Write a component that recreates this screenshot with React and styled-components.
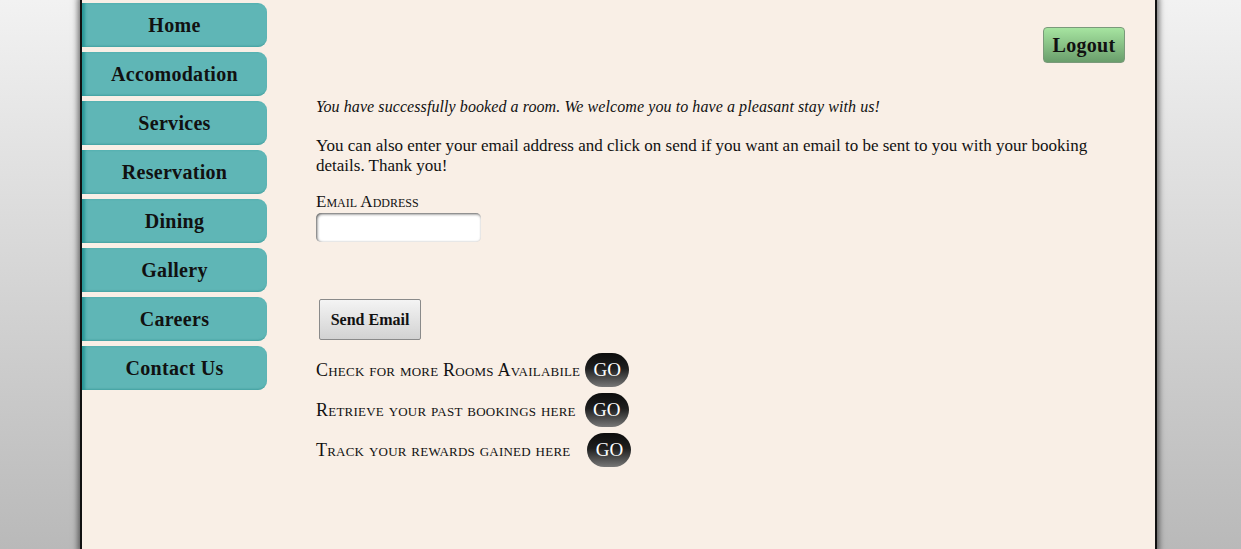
import styled, { createGlobalStyle } from "styled-components";

const GlobalStyle = createGlobalStyle`
  html, body {
    margin: 0;
    height: 100%;
  }
  body {
    background: linear-gradient(to bottom, #f2f2f2 0%, #b9b9b9 100%);
    font-family: "Liberation Serif", "DejaVu Serif", serif;
    overflow: hidden;
  }
`;

const Page = styled.div`
  width: 1073px;
  height: 549px;
  margin-left: 82px;
  background: #f9efe6;
  box-shadow: 0 0 0 2px #111, 0 0 6px 4px rgba(0, 0, 0, 0.55);
  display: flex;
`;

const Nav = styled.nav`
  width: 185px;
  padding-top: 3px;
  display: flex;
  flex-direction: column;
  gap: 5px;
`;

const NavItem = styled.a`
  height: 44px;
  display: flex;
  align-items: center;
  justify-content: center;
  background: #5fb6b6;
  border-radius: 0 9px 9px 0;
  box-shadow: inset 4px 0 3px -1px #2a9898, inset 0 -2px 2px -1px #4ba3a3;
  color: #111;
  font-weight: bold;
  font-size: 20px;
  letter-spacing: 0.3px;
  text-decoration: none;
  cursor: pointer;
`;

const Main = styled.main`
  flex: 1;
  padding: 27px 30px 0 49px;
  display: flex;
  flex-direction: column;
  color: #111;
`;

const TopBar = styled.div`
  display: flex;
  justify-content: flex-end;
  height: 36px;
`;

const LogoutButton = styled.button`
  width: 82px;
  height: 36px;
  border: 1px solid #7a9a7a;
  border-radius: 4px;
  background: linear-gradient(to bottom, #a6e4a0 0%, #6a9e6c 100%);
  font-family: inherit;
  font-weight: bold;
  font-size: 20px;
  letter-spacing: 0.3px;
  color: #111;
  padding: 0;
  cursor: pointer;
`;

const Welcome = styled.p`
  margin: 34px 0 0;
  font-style: italic;
  font-size: 16px;
  line-height: 20px;
  letter-spacing: 0.08px;
`;

const Para = styled.p`
  margin: 19px 0 0;
  font-size: 17px;
  line-height: 20px;
`;

const Label = styled.label`
  display: block;
  margin-top: 17px;
  font-variant: small-caps;
  font-size: 17px;
  line-height: 18px;
`;

const EmailInput = styled.input`
  display: block;
  width: 165px;
  height: 29px;
  box-sizing: border-box;
  margin-top: 2px;
  border: none;
  border-radius: 5px;
  background: #fff;
  box-shadow: inset 1px 1px 3px #555;
`;

const SendButton = styled.button`
  align-self: flex-start;
  margin: 57px 0 0 3px;
  width: 102px;
  height: 41px;
  border: 1px solid #8a8a8a;
  border-radius: 2px;
  background: linear-gradient(to bottom, #f4f4f4 0%, #d2d2d2 100%);
  font-family: inherit;
  font-weight: bold;
  font-size: 16px;
  color: #111;
  padding: 0;
  cursor: pointer;
`;

const LinkList = styled.div`
  margin-top: 13px;
  display: flex;
  flex-direction: column;
  gap: 6px;
`;

const LinkRow = styled.div`
  display: flex;
  align-items: center;
  gap: ${(p) => p.$gap}px;
  height: 34px;
  font-variant: small-caps;
  font-size: 18px;
  letter-spacing: 0.22px;
`;

const GoButton = styled.button`
  width: 44px;
  height: 34px;
  border: none;
  border-radius: 17px;
  background: linear-gradient(to bottom, #0c0c0c 0%, #1e1e1e 45%, #777 100%);
  color: #fff;
  font-family: inherit;
  font-size: 19px;
  letter-spacing: 0;
  padding: 0;
  cursor: pointer;
`;

const navItems = [
  "Home",
  "Accomodation",
  "Services",
  "Reservation",
  "Dining",
  "Gallery",
  "Careers",
  "Contact Us",
];

const links = [
  { text: "Check for more Rooms Availabile", gap: 5 },
  { text: "Retrieve your past bookings here", gap: 9 },
  { text: "Track your rewards gained here", gap: 17 },
];

export default function App() {
  return (
    <>
      <GlobalStyle />
      <Page>
        <Nav>
          {navItems.map((item) => (
            <NavItem key={item}>{item}</NavItem>
          ))}
        </Nav>
        <Main>
          <TopBar>
            <LogoutButton>Logout</LogoutButton>
          </TopBar>
          <Welcome>
            You have successfully booked a room. We welcome you to have a
            pleasant stay with us!
          </Welcome>
          <Para>
            You can also enter your email address and click on send if you
            want an email to be sent to you with your booking details. Thank
            you!
          </Para>
          <Label htmlFor="email">Email Address</Label>
          <EmailInput id="email" type="text" />
          <SendButton>Send Email</SendButton>
          <LinkList>
            {links.map((l) => (
              <LinkRow key={l.text} $gap={l.gap}>
                <span>{l.text}</span>
                <GoButton>GO</GoButton>
              </LinkRow>
            ))}
          </LinkList>
        </Main>
      </Page>
    </>
  );
}
